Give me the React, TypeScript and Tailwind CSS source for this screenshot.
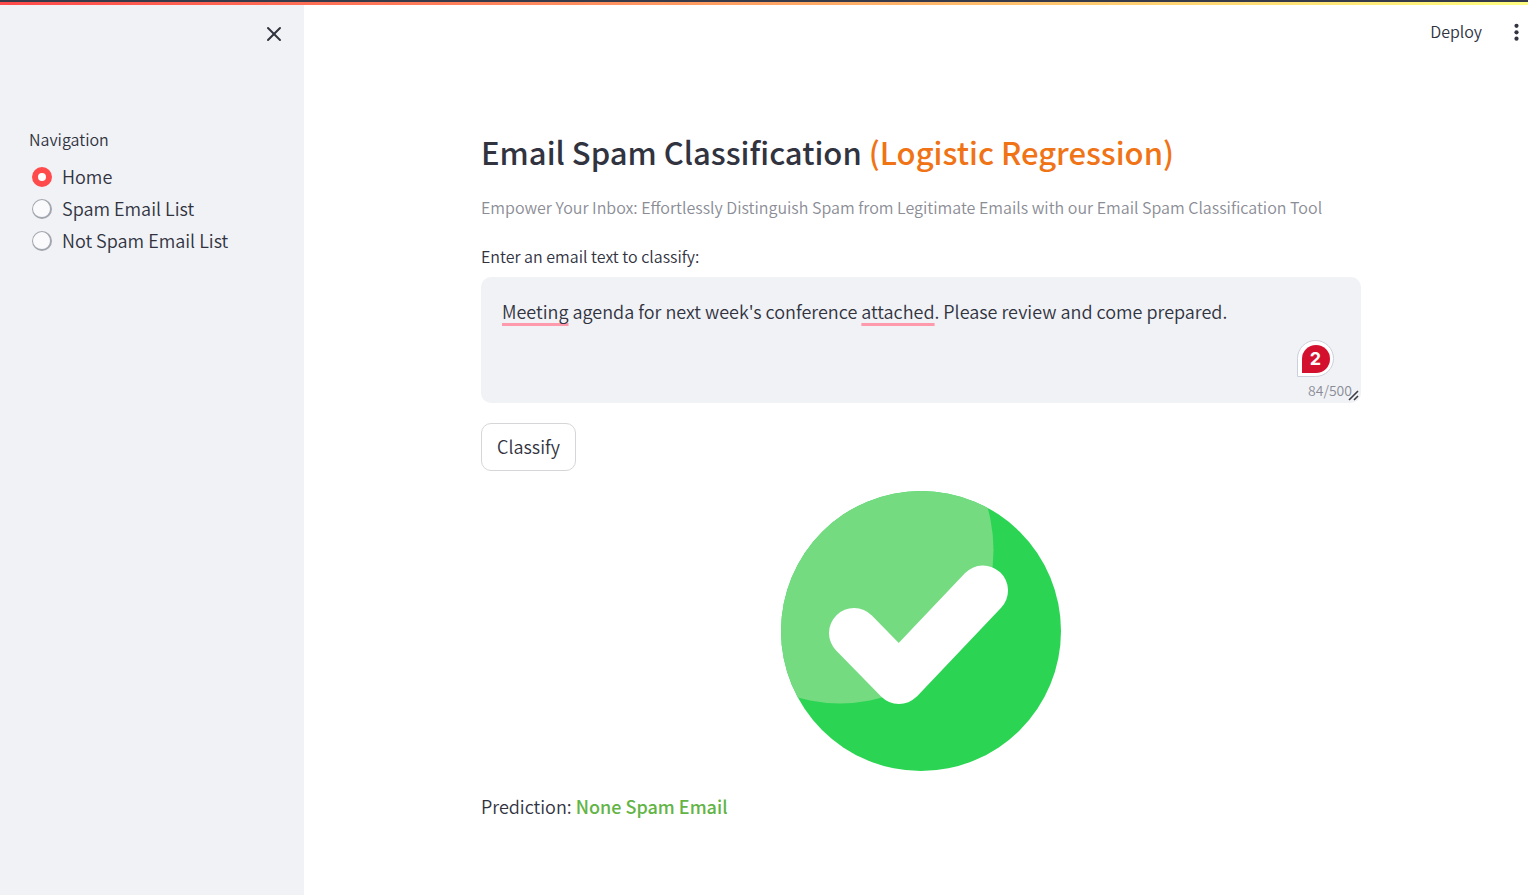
import { useState } from "react";
import { X } from "lucide-react";

const pages = ["Home", "Spam Email List", "Not Spam Email List"];
const flaggedWords = ["Meeting", "attached"];
const maxLength = 500;

function Sidebar() {
  const [page, setPage] = useState("Home");
  return (
    <aside className="w-76 shrink-0 bg-[#f0f2f6]">
      <div className="flex justify-end px-[18px] pt-[17px]">
        <button type="button" aria-label="Close sidebar" className="flex size-6 items-center justify-center">
          <X size={24} strokeWidth={2} />
        </button>
      </div>
      <fieldset className="px-[29px] pt-[81px]">
        <legend className="contents">
          <span className="block text-[16px] leading-6">Navigation</span>
        </legend>
        <div className="flex flex-col pt-[10px]">
          {pages.map((name) => (
            <label key={name} className="flex h-8 items-center gap-[10px] pl-[3px] text-[18px] leading-7">
              <input
                type="radio"
                name="page"
                checked={page === name}
                onChange={() => setPage(name)}
                className="size-5 shrink-0 appearance-none rounded-full border border-r-2 border-b-2 border-[#a3a6ae] bg-[#fafafc] checked:border-[6px] checked:border-[#ff4b4b] checked:bg-white"
              />
              <span className="pb-[2px]">{name}</span>
            </label>
          ))}
        </div>
      </fieldset>
    </aside>
  );
}

function Toolbar() {
  return (
    <header className="flex h-[54px] items-center justify-end gap-[28px] pr-[6px]">
      <button type="button" className="pb-[2px] text-[16px] leading-6">
        Deploy
      </button>
      <button type="button" aria-label="Main menu" className="flex h-6 w-3 items-center justify-center">
        <svg width="6" height="18" viewBox="0 0 6 18" fill="currentColor" aria-hidden="true">
          <circle cx="3.5" cy="2.8" r="2.1" />
          <circle cx="3.5" cy="9.3" r="2.1" />
          <circle cx="3.5" cy="15.7" r="2.1" />
        </svg>
      </button>
    </header>
  );
}

function Marks({ text }: { text: string }) {
  return (
    <>
      {text.split(/(\W+)/).map((part, i) =>
        flaggedWords.includes(part) ? (
          <span
            key={i}
            className="underline decoration-[#ff9aac] decoration-[3px] underline-offset-[4px] [text-decoration-skip-ink:none]"
          >
            {part}
          </span>
        ) : (
          part
        ),
      )}
    </>
  );
}

function EmailField() {
  const [text, setText] = useState(
    "Meeting agenda for next week's conference attached. Please review and come prepared.",
  );
  return (
    <div>
      <label htmlFor="email-text" className="block text-[16px] leading-6">
        Enter an email text to classify:
      </label>
      <div className="relative mt-[9px] h-[126px] rounded-[10px] bg-[#f0f2f6]">
        <div
          aria-hidden="true"
          className="absolute inset-0 overflow-hidden px-[21px] py-[18px] text-[18px] leading-8 whitespace-pre-wrap text-transparent"
        >
          <Marks text={text} />
        </div>
        <textarea
          id="email-text"
          value={text}
          maxLength={maxLength}
          spellCheck={false}
          onChange={(e) => setText(e.target.value)}
          className="relative block h-full w-full resize-none bg-transparent px-[21px] py-[18px] text-[18px] leading-8 outline-none"
        />
        <button
          type="button"
          aria-label="Writing suggestions"
          className="absolute right-[27px] bottom-[26px] flex size-[37px] items-center justify-center rounded-full rounded-bl-none border border-[#cdd0dc] bg-white"
        >
          <span className="flex size-7 items-center justify-center rounded-full rounded-bl-none bg-[#d3112f] font-['Inter',sans-serif] text-[18px] leading-7 font-bold text-white">
            2
          </span>
        </button>
        <span className="absolute right-[9px] bottom-px text-[14px] leading-6 text-[#8b8d96]">
          {text.length}/{maxLength}
        </span>
        <svg
          className="absolute right-[2px] bottom-[2px]"
          width="11"
          height="11"
          viewBox="0 0 11 11"
          stroke="#3c3d45"
          strokeWidth="1.6"
          aria-hidden="true"
        >
          <path d="M1 10 10 1M6 10l4-4" />
        </svg>
      </div>
    </div>
  );
}

function CheckBadge() {
  return (
    <svg width="280" height="280" viewBox="0 0 280 280" role="img" aria-label="Not spam">
      <defs>
        <clipPath id="disc">
          <circle cx="140" cy="140" r="140" />
        </clipPath>
      </defs>
      <circle cx="140" cy="140" r="140" fill="#2bd553" />
      <circle cx="59" cy="59" r="153.5" fill="#75db81" clipPath="url(#disc)" />
      <path
        d="M73 142 118 188 202 99.5"
        fill="none"
        stroke="#fff"
        strokeWidth="50"
        strokeLinecap="round"
        strokeLinejoin="round"
      />
    </svg>
  );
}

export default function App() {
  return (
    <div className="flex min-h-screen flex-col bg-white font-['Noto_Sans_CJK_SC',sans-serif] font-[350] text-[#31333f]">
      <div className="h-[5px] border-t-2 border-[#373a49] bg-linear-to-r/srgb from-[#ff4b4b] to-[#fffd80]" />
      <div className="flex flex-1">
        <Sidebar />
        <div className="min-w-0 flex-1">
          <Toolbar />
          <main className="pt-[72px] pb-16 pl-[10px]">
            <div className="mx-auto max-w-[880px]">
              <h1 className="text-[31px] leading-[42px] font-medium">
                Email Spam Classification <span className="text-[#f07316]">(Logistic Regression)</span>
              </h1>
              <p className="pt-[22px] pb-[25px] text-[16px] leading-6 text-[#8b8d96]">
                Empower Your Inbox: Effortlessly Distinguish Spam from Legitimate Emails with our Email Spam
                Classification Tool
              </p>
              <EmailField />
              <button
                type="button"
                className="mt-5 block h-12 rounded-[10px] border border-[#d6d6d9] bg-white px-[15px] pb-[2px] text-[18px] leading-8"
              >
                Classify
              </button>
              <div className="flex justify-center pt-5 pb-[19px]">
                <CheckBadge />
              </div>
              <p className="text-[18px] leading-8">
                Prediction: <strong className="font-medium text-[#62b446]">None Spam Email</strong>
              </p>
            </div>
          </main>
        </div>
      </div>
    </div>
  );
}
